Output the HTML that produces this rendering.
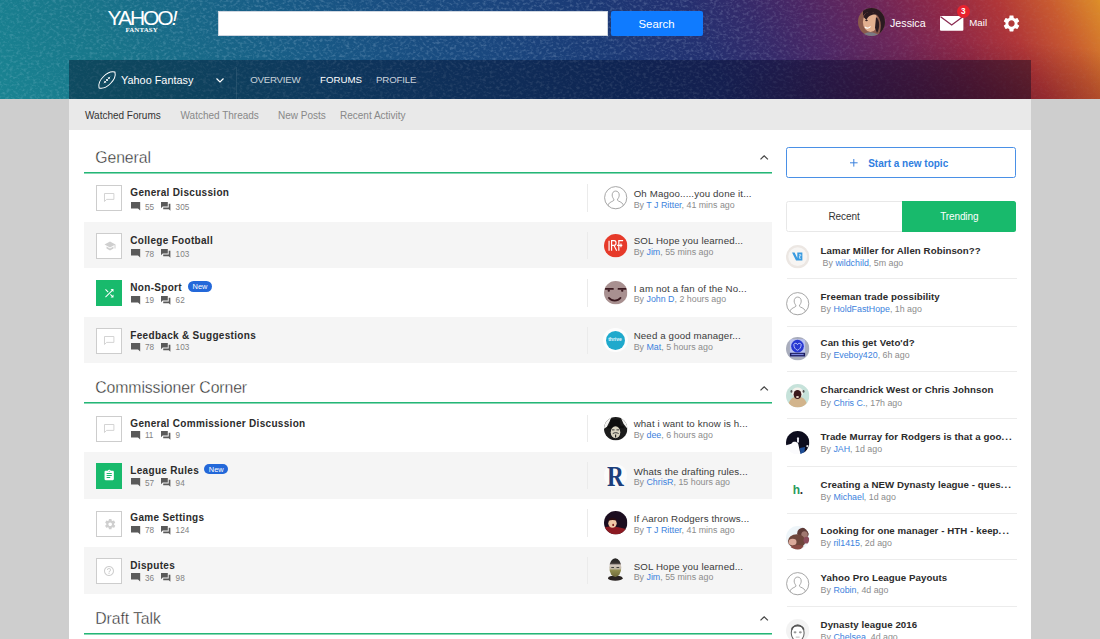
<!DOCTYPE html>
<html lang="en">
<head>
<meta charset="utf-8">
<title>Yahoo Fantasy Forums</title>
<style>
*{box-sizing:border-box;margin:0;padding:0}
html,body{width:1100px;height:639px;overflow:hidden}
body{background:#cecece;font-family:"Liberation Sans",sans-serif;color:#333;position:relative}
a{text-decoration:none;color:#3b82dd}
#hdr{position:absolute;left:0;top:0;width:1100px;height:99px;overflow:hidden;
background:radial-gradient(ellipse 260px 70px at 88% 112%,rgba(50,0,10,.34) 0,rgba(50,0,10,0) 100%),linear-gradient(63deg,#1a8492 0%,#198090 3%,#18768a 11%,#186888 20%,#185a86 29%,#194f82 37%,#1a467e 46%,#1b3a76 55%,#243070 63.500%,#352a6a 69%,#4c2664 74%,#6e2658 80.500%,#902846 86%,#b03638 91%,#c85a30 95.500%,#da882a 99.500%,#de9028 100%)}
#nav{position:absolute;left:69px;top:59.5px;width:962px;height:39.5px;background:rgba(0,8,33,.41)}
#tex{-webkit-mask-image:linear-gradient(90deg,rgba(0,0,0,.75) 0,#000 25%,#000 64%,rgba(0,0,0,.45) 78%,rgba(0,0,0,.12) 100%);mask-image:linear-gradient(90deg,rgba(0,0,0,.75) 0,#000 25%,#000 64%,rgba(0,0,0,.45) 78%,rgba(0,0,0,.12) 100%)}
#subnav{position:absolute;left:69px;top:99px;width:962px;height:30.5px;background:#e9e9e9}
#main{position:absolute;left:69px;top:129.5px;width:962px;height:520px;background:#fff}
.l{position:absolute;white-space:nowrap;line-height:1;transform:translateY(-50%)}
.b{position:absolute}
.h{font-size:15.8px;color:#262626;letter-spacing:-.1px;-webkit-text-stroke:.36px #fff}
.ft{font-size:10px;font-weight:bold;color:#2b2b2b;letter-spacing:.31px}
.st{font-size:8.2px;color:#828282}
.pt{font-size:9.7px;color:#3a3a3a;letter-spacing:.14px}
.by{font-size:8.85px;color:#8c8c8c}
.tt{font-size:9.7px;font-weight:bold;color:#2b2b2b;letter-spacing:.07px}
.tt b{letter-spacing:1.100px;font-weight:bold}
.row{position:absolute;left:84px;width:688px;height:46.700px}
.row.g{background:#f5f5f5}
.ib{position:absolute;left:96.200px;width:26.100px;height:26.100px;border:1px solid #cdcdcd;background:#fff}
.ib.gr{background:#18ba6c;border-color:#18ba6c}
.vd{position:absolute;left:587.3px;width:1px;height:27.5px;background:#ebebeb}
.av{position:absolute;width:23.4px;height:23.4px;border-radius:50%;overflow:hidden}
.gl{position:absolute;left:84px;width:688px;height:2px;background:linear-gradient(#24b676 50%,rgba(36,182,118,.55) 50%)}
.dv{position:absolute;left:786.500px;width:230px;height:1px;background:#ececec}
.new{position:absolute;height:10.9px;width:23.9px;border-radius:5.5px;background:#2368d9;color:#fff;font-size:7.4px;text-align:center;line-height:11.4px}
svg{position:absolute;overflow:visible}
</style>
</head>
<body>
<div id="hdr"><svg id="tex" style="left:0;top:0" width="1100" height="99"><filter id="nz" x="0" y="0" width="100%" height="100%"><feTurbulence type="fractalNoise" baseFrequency="0.30 0.38" numOctaves="2" seed="7"/><feColorMatrix values="0 0 0 0 0.72  0 0 0 0 0.86  0 0 0 0 1  3.200 0 0 0 -1.500"/></filter><rect width="1100" height="99" filter="url(#nz)" opacity=".18"/></svg><div id="nav"></div></div>
<div id="subnav"></div>
<div id="main"></div>
<div class="l " style="left:107.6px;top:17.2px;color:#fff;font-size:21px;letter-spacing:-2.05px;font-weight:normal">YAHOO<i>!</i></div>
<div class="l " style="left:125.5px;top:30.1px;color:#fff;font-size:6.9px;font-family:'Liberation Serif',serif;font-weight:bold;letter-spacing:.1px">FANTASY</div>
<div class="b" style="left:218px;top:11px;width:390px;height:25px;background:#fff;border:1px solid #cfd6e0"></div>
<div class="b" style="left:611px;top:11px;width:92px;height:25px;background:#0f7bff;border-radius:2px"></div>
<div class="l " style="left:638.5px;top:24.9px;color:#fff;font-size:11.35px">Search</div>
<svg style="left:857.500px;top:8px" width="27" height="28" viewBox="0 0 27 28"><defs><clipPath id="jc"><ellipse cx="13.500" cy="14" rx="13.500" ry="14"/></clipPath></defs><g clip-path="url(#jc)"><rect width="27" height="28" fill="#8a5a4c"/><path d="M5 0H27V28H20C24 22,24 12,19 7C15 3,8 3,5 8Z" fill="#2a1a20"/><ellipse cx="12.500" cy="14" rx="7.600" ry="10" fill="#e2b090"/><path d="M5.500 9C7 3.500,14 2,19 6.500C15 6,10 7,8.500 12Z" fill="#2a1a20"/><path d="M18 9C22 12,22 20,19 25L17 20Z" fill="#2a1a20"/><ellipse cx="8.500" cy="12.500" rx="1.300" ry=".7" fill="#3a2220"/><path d="M7 19C8.500 20.500,11 20.500,12.500 18.500" stroke="#fff" stroke-width="1.200" fill="none"/><path d="M4 28C7 23,16 23,22 28Z" fill="#7a7a84"/></g></svg>
<div class="l " style="left:890px;top:23px;color:#fff;font-size:10.7px">Jessica</div>
<div class="l " style="left:969.3px;top:23px;color:#fff;font-size:9.7px">Mail</div>
<svg style="left:940.4px;top:15.8px" width="23.4" height="14.7" viewBox="0 0 23.4 14.7"><rect width="23.4" height="14.7" rx="1" fill="#fff"/><path d="M0.6 0.8 L11.7 9 L22.8 0.8" fill="none" stroke="#8a2a50" stroke-width="1.3"/></svg>
<div class="b" style="left:956.5px;top:5px;width:13px;height:13px;border-radius:50%;background:#e8222e"></div>
<div class="l " style="left:960.9px;top:11.6px;color:#fff;font-size:8.2px;font-weight:bold">3</div>
<svg style="left:1001.600px;top:13.700px" width="19" height="19" viewBox="0 0 24 24"><path fill="#fff" d="M19.43 12.98c.04-.32.07-.64.07-.98s-.03-.66-.07-.98l2.11-1.65c.19-.15.24-.42.12-.64l-2-3.46c-.12-.22-.39-.3-.61-.22l-2.49 1c-.52-.4-1.08-.73-1.69-.98l-.38-2.65C14.46 2.18 14.25 2 14 2h-4c-.25 0-.46.18-.49.42l-.38 2.65c-.61.25-1.17.59-1.69.98l-2.49-1c-.23-.09-.49 0-.61.22l-2 3.46c-.13.22-.07.49.12.64l2.11 1.65c-.04.32-.07.65-.07.98s.03.66.07.98l-2.11 1.65c-.19.15-.24.42-.12.64l2 3.46c.12.22.39.3.61.22l2.49-1c.52.4 1.08.73 1.69.98l.38 2.65c.03.24.24.42.49.42h4c.25 0 .46-.18.49-.42l.38-2.65c.61-.25 1.17-.59 1.69-.98l2.49 1c.23.09.49 0 .61-.22l2-3.46c.12-.22.07-.49-.12-.64l-2.11-1.65zM12 16c-2.21 0-4-1.790-4-4s1.790-4 4-4 4 1.790 4 4-1.790 4-4 4z"/></svg>
<svg style="left:97.5px;top:70.5px" width="18" height="18" viewBox="0 0 18 18"><g transform="rotate(-45 9 9)" fill="none" stroke="#fff" stroke-width="1"><path d="M-2.200 9 C1.500 2.400,16.500 2.400,20.200 9 C16.500 15.600,1.500 15.600,-2.200 9Z"/><path d="M4.500 9H13.500M6.300 7.600v2.800M9 7.600v2.800M11.700 7.600v2.800" stroke-width=".8"/></g></svg>
<div class="l " style="left:121px;top:80px;color:#fff;font-size:10.9px">Yahoo Fantasy</div>
<svg style="left:216.3px;top:78px" width="8" height="5" viewBox="0 0 8 5"><path d="M0.5 0.5 L4 4 L7.5 0.5" fill="none" stroke="#fff" stroke-width="1.2"/></svg>
<div class="b" style="left:236px;top:67px;width:1px;height:32px;background:rgba(255,255,255,.09)"></div>
<div class="l " style="left:250.3px;top:79.8px;color:rgba(255,255,255,.78);font-size:9.7px;letter-spacing:-.25px">OVERVIEW</div>
<div class="l " style="left:320px;top:79.8px;color:#fff;font-size:9.7px">FORUMS</div>
<div class="l " style="left:376px;top:79.8px;color:rgba(255,255,255,.78);font-size:9.7px;letter-spacing:-.15px">PROFILE</div>
<div class="l " style="left:85px;top:115.8px;color:#333;font-size:10px">Watched Forums</div>
<div class="l " style="left:180.5px;top:115.8px;color:#888;font-size:10px">Watched Threads</div>
<div class="l " style="left:278px;top:115.8px;color:#888;font-size:10px">New Posts</div>
<div class="l " style="left:340px;top:115.8px;color:#888;font-size:10px">Recent Activity</div>
<div class="l h" style="left:95.3px;top:157.9px;">General</div>
<svg style="left:760.4px;top:155.2px" width="8.4" height="4.800" viewBox="0 0 8.4 4.8"><path d="M0.500 4.400L4.200 0.800L7.900 4.400" fill="none" stroke="#444" stroke-width="1.250"/></svg>
<div class="gl" style="top:172px"></div>
<div class="row" style="top:174.2px"></div>
<div class="ib" style="top:185.2px"><svg style="left:6.850px;top:7.100px" width="10.400" height="9.500" viewBox="0 0 10.4 9.5"><path d="M0.500 0.500H9.900V6.400H2.600L0.500 8.500Z" fill="none" stroke="#cfcfcf" stroke-width=".9"/></svg></div>
<div class="l ft" style="left:130.3px;top:187.80px;transform:none;">General Discussion</div>
<svg style="left:130.6px;top:201.8px" width="9.2" height="8.6" viewBox="0 0 9.2 8.6"><path d="M0 0H9.200V8.600L7 6.600H0Z" fill="#5a5a5a"/></svg>
<div class="l st" style="left:144.9px;top:203.70px;transform:none;">55</div>
<svg style="left:161.2px;top:201.7px" width="9.4" height="8.800" viewBox="0 0 9.4 8.8"><path d="M0 0H6.800V4.600H1.700L0 6.200Z M7.700 1.800H9.400V8.800L7.800 7.300H2.200V5.500H7.700Z" fill="#5a5a5a"/></svg>
<div class="l st" style="left:175.6px;top:203.70px;transform:none;">305</div>
<div class="vd" style="top:184.2px"></div>
<svg style="left:603.6px;top:186.2px" width="23.4" height="23.4" viewBox="0 0 24 24"><defs><clipPath id="c603186"><circle cx="12" cy="12" r="11.2"/></clipPath></defs><circle cx="12" cy="12" r="11.4" fill="#fff" stroke="#9a9a9a" stroke-width=".9"/><g clip-path="url(#c603186)" fill="none" stroke="#9a9a9a" stroke-width=".9"><path d="M12 5.200c2.300 0 3.600 1.800 3.600 4.100 0 1.700-.8 3.300-1.700 4.100v1.300c.6 1 4.600 1.700 5.600 4.100 .5 1.200.5 3 .5 5H4c0-2 0-3.800.5-5 1-2.400 5-3.100 5.600-4.100v-1.300c-.9-.8-1.700-2.400-1.700-4.100 0-2.300 1.300-4.100 3.600-4.100z"/></g></svg>
<div class="l pt" style="left:633.7px;top:188.95px;transform:none;">Oh Magoo.....you done it...</div>
<div class="l by" style="left:633.7px;top:200.88px;transform:none;">By <a>T J Ritter</a>, 41 mins ago</div>
<div class="row g" style="top:221.7px"></div>
<div class="ib" style="top:232.7px"><svg style="left:6.900px;top:7.700px" width="12" height="10" viewBox="0 0 24 20"><path fill="#cfcfcf" d="M5 11.18v4L12 19l7-3.82v-4L12 15l-7-3.820zM12 1L1 7l11 6 9-4.910V15h2V7L12 1z"/></svg></div>
<div class="l ft" style="left:130.3px;top:235.80px;transform:none;">College Football</div>
<svg style="left:130.6px;top:248.8px" width="9.2" height="8.6" viewBox="0 0 9.2 8.6"><path d="M0 0H9.200V8.600L7 6.600H0Z" fill="#5a5a5a"/></svg>
<div class="l st" style="left:144.9px;top:250.70px;transform:none;">78</div>
<svg style="left:161.2px;top:248.7px" width="9.4" height="8.800" viewBox="0 0 9.4 8.8"><path d="M0 0H6.800V4.600H1.700L0 6.200Z M7.700 1.800H9.400V8.800L7.800 7.300H2.200V5.500H7.700Z" fill="#5a5a5a"/></svg>
<div class="l st" style="left:175.6px;top:250.70px;transform:none;">103</div>
<div class="vd" style="top:231.6px"></div>
<svg style="left:603.6px;top:233.6px" width="23.4" height="23.4" viewBox="0 0 24 24"><defs><clipPath id="k1"><circle cx="12" cy="12" r="12"/></clipPath></defs><g clip-path="url(#k1)"><rect width="24" height="24" fill="#e63a2a"/><g fill="none" stroke="#fff" stroke-width="1.2"><path d="M5.200 6.800V17.200M7.800 17.200V6.800H10.400C13 6.800 13 11.600 10.400 11.600H7.800M10.200 11.600L13 17.200"/><path d="M15.200 17.200V6.800H19.600M13.400 11.600H18.800M17.400 9.800V13.600"/></g></g></svg>
<div class="l pt" style="left:633.7px;top:235.95px;transform:none;">SOL Hope you learned...</div>
<div class="l by" style="left:633.7px;top:247.88px;transform:none;">By <a>Jim</a>, 55 mins ago</div>
<div class="row" style="top:269.2px"></div>
<div class="ib gr" style="top:280.2px"><svg style="left:5.900px;top:6px" width="12.600" height="12.600" viewBox="0 0 24 24"><path fill="#fff" d="M10.590 9.170L5.410 4 4 5.410l5.170 5.170 1.420-1.410zM14.500 4l2.040 2.040L4 18.590 5.410 20 17.960 7.460 20 9.500V4h-5.500zm.33 9.410l-1.410 1.410 3.130 3.130L14.500 20H20v-5.500l-2.040 2.040-3.130-3.130z"/></svg></div>
<div class="l ft" style="left:130.3px;top:282.80px;transform:none;">Non-Sport</div>
<div class="new" style="left:188px;top:280.7px">New</div>
<svg style="left:130.6px;top:295.6px" width="9.2" height="8.6" viewBox="0 0 9.2 8.6"><path d="M0 0H9.200V8.600L7 6.600H0Z" fill="#5a5a5a"/></svg>
<div class="l st" style="left:144.9px;top:296.70px;transform:none;">19</div>
<svg style="left:161.2px;top:295.5px" width="9.4" height="8.800" viewBox="0 0 9.4 8.8"><path d="M0 0H6.800V4.600H1.700L0 6.200Z M7.700 1.800H9.400V8.800L7.800 7.300H2.200V5.500H7.700Z" fill="#5a5a5a"/></svg>
<div class="l st" style="left:175.6px;top:296.70px;transform:none;">62</div>
<div class="vd" style="top:279.1px"></div>
<svg style="left:603.6px;top:281.1px" width="23.4" height="23.4" viewBox="0 0 24 24"><defs><clipPath id="k2"><circle cx="12" cy="12" r="12"/></clipPath></defs><g clip-path="url(#k2)"><rect width="24" height="24" fill="#a89090"/><g fill="#3a1a20"><rect x="1" y="7.300" width="9" height="1.700" rx=".6"/><rect x="14" y="7.300" width="9" height="1.700" rx=".6"/><rect x="3.800" y="8.600" width="2.200" height="2.400" rx=".8"/><rect x="17.600" y="8.600" width="2.200" height="2.400" rx=".8"/></g><path d="M5 17.300C8 21,14 21,17 17.300" fill="none" stroke="#3a1a20" stroke-width="1.700" stroke-linecap="round"/></g></svg>
<div class="l pt" style="left:633.7px;top:283.95px;transform:none;">I am not a fan of the No...</div>
<div class="l by" style="left:633.7px;top:294.88px;transform:none;">By <a>John D</a>, 2 hours ago</div>
<div class="row g" style="top:316.6px"></div>
<div class="ib" style="top:327.6px"><svg style="left:6.850px;top:7.100px" width="10.400" height="9.500" viewBox="0 0 10.4 9.5"><path d="M0.500 0.500H9.900V6.400H2.600L0.500 8.500Z" fill="none" stroke="#cfcfcf" stroke-width=".9"/></svg></div>
<div class="l ft" style="left:130.3px;top:330.80px;transform:none;">Feedback &amp; Suggestions</div>
<svg style="left:130.6px;top:343.0px" width="9.2" height="8.6" viewBox="0 0 9.2 8.6"><path d="M0 0H9.200V8.600L7 6.600H0Z" fill="#5a5a5a"/></svg>
<div class="l st" style="left:144.9px;top:343.70px;transform:none;">78</div>
<svg style="left:161.2px;top:342.9px" width="9.4" height="8.800" viewBox="0 0 9.4 8.8"><path d="M0 0H6.800V4.600H1.700L0 6.200Z M7.700 1.800H9.400V8.800L7.800 7.300H2.200V5.500H7.700Z" fill="#5a5a5a"/></svg>
<div class="l st" style="left:175.6px;top:343.70px;transform:none;">103</div>
<div class="vd" style="top:326.5px"></div>
<div class="b" style="left:603.0px;top:327.9px;width:24.600px;height:24.600px;border-radius:50%;background:#fdfdfd"></div>
<div class="av" style="left:605.8000000000001px;top:330.7px;width:19px;height:19px;background:#1fa9cc"><span style="position:absolute;left:2.400px;top:6.700px;color:#e8f8ff;font-size:5px;font-weight:bold;line-height:1">thrive</span></div>
<div class="l pt" style="left:633.7px;top:330.95px;transform:none;">Need a good manager...</div>
<div class="l by" style="left:633.7px;top:342.88px;transform:none;">By <a>Mat</a>, 5 hours ago</div>
<div class="l h" style="left:95.3px;top:388.2px;">Commissioner Corner</div>
<svg style="left:760.4px;top:385.5px" width="8.4" height="4.800" viewBox="0 0 8.4 4.8"><path d="M0.500 4.400L4.200 0.800L7.900 4.400" fill="none" stroke="#444" stroke-width="1.250"/></svg>
<div class="gl" style="top:402px"></div>
<div class="row" style="top:404.6px"></div>
<div class="ib" style="top:415.6px"><svg style="left:6.850px;top:7.100px" width="10.400" height="9.500" viewBox="0 0 10.4 9.5"><path d="M0.500 0.500H9.900V6.400H2.600L0.500 8.500Z" fill="none" stroke="#cfcfcf" stroke-width=".9"/></svg></div>
<div class="l ft" style="left:130.3px;top:418.80px;transform:none;">General Commissioner Discussion</div>
<svg style="left:130.6px;top:431.0px" width="9.2" height="8.6" viewBox="0 0 9.2 8.6"><path d="M0 0H9.200V8.600L7 6.600H0Z" fill="#5a5a5a"/></svg>
<div class="l st" style="left:144.9px;top:431.70px;transform:none;">11</div>
<svg style="left:161.2px;top:430.9px" width="9.4" height="8.800" viewBox="0 0 9.4 8.8"><path d="M0 0H6.800V4.600H1.700L0 6.200Z M7.700 1.800H9.400V8.800L7.800 7.300H2.200V5.500H7.700Z" fill="#5a5a5a"/></svg>
<div class="l st" style="left:175.6px;top:431.70px;transform:none;">9</div>
<div class="vd" style="top:414.5px"></div>
<svg style="left:603.6px;top:416.5px" width="23.4" height="23.4" viewBox="0 0 24 24"><defs><clipPath id="k3"><circle cx="12" cy="12" r="12"/></clipPath></defs><g clip-path="url(#k3)"><rect width="24" height="24" fill="#1c1c1c"/><path d="M0 0H8L3 10L0 12Z" fill="#f4f4f2"/><path d="M17 0H24V12L20 7Z" fill="#f4f4f2"/><path d="M6.500 2.500H16L17 9H21L20 11.500H3L4 9.500L6 9Z" fill="#0e0e0e"/><ellipse cx="11.800" cy="15.600" rx="4.900" ry="6.200" fill="#d9d4c0"/><path d="M8.200 13.200H10.800M12.800 13.200H15.400" stroke="#333" stroke-width="1"/><path d="M9 17C11 15.800,13 15.800,15 17" stroke="#222" stroke-width=".9" fill="none"/><rect x="11.300" y="18" width="1.200" height="3" fill="#222"/></g></svg>
<div class="l pt" style="left:633.7px;top:418.95px;transform:none;">what i want to know is h...</div>
<div class="l by" style="left:633.7px;top:430.88px;transform:none;">By <a>dee</a>, 6 hours ago</div>
<div class="row g" style="top:452.0px"></div>
<div class="ib gr" style="top:463.0px"><svg style="left:6.100px;top:5.300px" width="12.400" height="13" viewBox="0 0 24 24"><path fill="#fff" d="M19 3h-4.180C14.400 1.840 13.300 1 12 1c-1.300 0-2.400.84-2.820 2H5c-1.100 0-2 .9-2 2v14c0 1.100.9 2 2 2h14c1.100 0 2-.9 2-2V5c0-1.100-.9-2-2-2zm-7 0c.55 0 1 .45 1 1s-.45 1-1 1-1-.45-1-1 .45-1 1-1zm2 14H7v-2h7v2zm3-4H7v-2h10v2zm0-4H7V7h10v2z"/></svg></div>
<div class="l ft" style="left:130.3px;top:465.80px;transform:none;">League Rules</div>
<div class="new" style="left:204.3px;top:463.5px">New</div>
<svg style="left:130.6px;top:478.4px" width="9.2" height="8.6" viewBox="0 0 9.2 8.6"><path d="M0 0H9.200V8.600L7 6.600H0Z" fill="#5a5a5a"/></svg>
<div class="l st" style="left:144.9px;top:479.70px;transform:none;">57</div>
<svg style="left:161.2px;top:478.3px" width="9.4" height="8.800" viewBox="0 0 9.4 8.8"><path d="M0 0H6.800V4.600H1.700L0 6.200Z M7.700 1.800H9.400V8.800L7.800 7.300H2.200V5.500H7.700Z" fill="#5a5a5a"/></svg>
<div class="l st" style="left:175.6px;top:479.70px;transform:none;">94</div>
<div class="vd" style="top:461.9px"></div>
<div class="b" style="left:603.6px;top:463.9px;width:23.400px;height:23.400px;border-radius:50%;background:#fbfbfb"></div>
<div class="l" style="left:607.0px;top:476.0px;font-family:'Liberation Serif',serif;font-weight:bold;font-size:29px;color:#1b3f7c;transform:translateY(-50%) scaleX(.8);transform-origin:0 50%">R</div>
<div class="l pt" style="left:633.7px;top:466.95px;transform:none;">Whats the drafting rules...</div>
<div class="l by" style="left:633.7px;top:477.88px;transform:none;">By <a>ChrisR</a>, 15 hours ago</div>
<div class="row" style="top:499.5px"></div>
<div class="ib" style="top:510.5px"><svg style="left:6.400px;top:6.400px" width="12.400" height="12.400" viewBox="0 0 24 24"><path fill="#cfcfcf" d="M19.43 12.98c.04-.32.07-.64.07-.98s-.03-.66-.07-.98l2.11-1.65c.19-.15.24-.42.12-.64l-2-3.46c-.12-.22-.39-.3-.61-.22l-2.49 1c-.52-.4-1.08-.73-1.69-.98l-.38-2.65C14.46 2.18 14.25 2 14 2h-4c-.25 0-.46.18-.49.42l-.38 2.65c-.61.25-1.17.59-1.69.98l-2.49-1c-.23-.09-.49 0-.61.22l-2 3.46c-.13.22-.07.49.12.64l2.11 1.65c-.04.32-.07.65-.07.98s.03.66.07.98l-2.11 1.65c-.19.15-.24.42-.12.64l2 3.46c.12.22.39.3.61.22l2.49-1c.52.4 1.08.73 1.69.98l.38 2.65c.03.24.24.42.49.42h4c.25 0 .46-.18.49-.42l.38-2.65c.61-.25 1.17-.59 1.69-.98l2.49 1c.23.09.49 0 .61-.22l2-3.46c.12-.22.07-.49-.12-.64l-2.110-1.650zM12 15.500c-1.930 0-3.500-1.570-3.500-3.500s1.570-3.500 3.500-3.500 3.500 1.570 3.500 3.500-1.570 3.500-3.500 3.500z"/></svg></div>
<div class="l ft" style="left:130.3px;top:512.80px;transform:none;">Game Settings</div>
<svg style="left:130.6px;top:525.9px" width="9.2" height="8.6" viewBox="0 0 9.2 8.6"><path d="M0 0H9.200V8.600L7 6.600H0Z" fill="#5a5a5a"/></svg>
<div class="l st" style="left:144.9px;top:526.70px;transform:none;">78</div>
<svg style="left:161.2px;top:525.8px" width="9.4" height="8.800" viewBox="0 0 9.4 8.8"><path d="M0 0H6.800V4.600H1.700L0 6.200Z M7.700 1.800H9.400V8.800L7.800 7.300H2.200V5.500H7.700Z" fill="#5a5a5a"/></svg>
<div class="l st" style="left:175.6px;top:526.70px;transform:none;">124</div>
<div class="vd" style="top:509.4px"></div>
<svg style="left:603.6px;top:511.4px" width="23.4" height="23.4" viewBox="0 0 24 24"><defs><clipPath id="k4"><circle cx="12" cy="12" r="12"/></clipPath></defs><g clip-path="url(#k4)"><rect width="24" height="24" fill="#1b0d1f"/><path d="M0 17C6 15,14 16,24 19V24H0Z" fill="#8c1a22"/><ellipse cx="8.700" cy="12.600" rx="4.300" ry="4.500" fill="#f0c8a6"/><path d="M4 10C5 6,12 6,13.500 10C11 9,7 9,4 10Z" fill="#2a0c10"/><ellipse cx="9.400" cy="14.300" rx=".9" ry="1.200" fill="#7a1a1a"/></g></svg>
<div class="l pt" style="left:633.7px;top:513.95px;transform:none;">If Aaron Rodgers throws...</div>
<div class="l by" style="left:633.7px;top:525.88px;transform:none;">By <a>T J Ritter</a>, 41 mins ago</div>
<div class="row g" style="top:547.0px"></div>
<div class="ib" style="top:558.0px"><svg style="left:6.200px;top:6.200px" width="12" height="12" viewBox="0 0 24 24"><path fill="#cfcfcf" d="M11 18h2v-2h-2v2zm1-16C6.480 2 2 6.480 2 12s4.480 10 10 10 10-4.480 10-10S17.520 2 12 2zm0 18c-4.410 0-8-3.590-8-8s3.590-8 8-8 8 3.590 8 8-3.590 8-8 8zm0-14c-2.210 0-4 1.790-4 4h2c0-1.100.9-2 2-2s2 .9 2 2c0 2-3 1.750-3 5h2c0-2.250 3-2.500 3-5 0-2.210-1.790-4-4-4z"/></svg></div>
<div class="l ft" style="left:130.3px;top:560.80px;transform:none;">Disputes</div>
<svg style="left:130.6px;top:573.4px" width="9.2" height="8.6" viewBox="0 0 9.2 8.6"><path d="M0 0H9.200V8.600L7 6.600H0Z" fill="#5a5a5a"/></svg>
<div class="l st" style="left:144.9px;top:574.70px;transform:none;">36</div>
<svg style="left:161.2px;top:573.2px" width="9.4" height="8.800" viewBox="0 0 9.4 8.8"><path d="M0 0H6.800V4.600H1.700L0 6.200Z M7.700 1.800H9.400V8.800L7.800 7.300H2.200V5.500H7.700Z" fill="#5a5a5a"/></svg>
<div class="l st" style="left:175.6px;top:574.70px;transform:none;">98</div>
<div class="vd" style="top:556.9px"></div>
<svg style="left:608.0px;top:558.3px" width="15" height="23" viewBox="0 0 15 23"><defs><linearGradient id="zg" x1="0" y1="0" x2="0" y2="1"><stop offset="0" stop-color="#222"/><stop offset=".27" stop-color="#3a3432"/><stop offset=".36" stop-color="#d4c8c0"/><stop offset=".55" stop-color="#c2b8a4"/><stop offset=".66" stop-color="#8f8c4c"/><stop offset="1" stop-color="#6f6a3a"/></linearGradient></defs><ellipse cx="7.300" cy="20.200" rx="7.300" ry="2.600" fill="#2a2422"/><ellipse cx="7.300" cy="9.600" rx="6" ry="9.300" fill="url(#zg)"/><path d="M3.300 9.500H6M8.500 9.500H11.200" stroke="#333" stroke-width=".9"/></svg>
<div class="l pt" style="left:633.7px;top:561.95px;transform:none;">SOL Hope you learned...</div>
<div class="l by" style="left:633.7px;top:572.88px;transform:none;">By <a>Jim</a>, 55 mins ago</div>
<div class="l h" style="left:95.3px;top:618.6px;">Draft Talk</div>
<svg style="left:760.4px;top:615.9px" width="8.4" height="4.800" viewBox="0 0 8.4 4.8"><path d="M0.500 4.400L4.200 0.800L7.900 4.400" fill="none" stroke="#444" stroke-width="1.250"/></svg>
<div class="gl" style="top:633px"></div>
<div class="b" style="left:786.300px;top:147.200px;width:230.200px;height:30.900px;border:1.300px solid #4a90e6;border-radius:2.5px;background:#fff"></div>
<svg style="left:850.4px;top:159px" width="7.6" height="7.600" viewBox="0 0 7.6 7.6"><path d="M3.800 0V7.600M0 3.800H7.600" stroke="#3b82dd" stroke-width="1"/></svg>
<div class="l " style="left:868.2px;top:163.6px;color:#2f7ee0;font-size:10px;font-weight:bold">Start a new topic</div>
<div class="b" style="left:786.400px;top:201.200px;width:230px;height:30.500px;border:1px solid #e8e8e8;border-radius:2.5px;background:#fff"></div>
<div class="b" style="left:901.500px;top:201.200px;width:114.900px;height:30.500px;border-radius:0 2.5px 2.5px 0;background:#18ba6c"></div>
<div class="l " style="left:828.5px;top:217.3px;color:#333;font-size:10px;letter-spacing:-.1px">Recent</div>
<div class="l " style="left:940.2px;top:217.3px;color:#fff;font-size:10px;letter-spacing:-.12px">Trending</div>
<svg style="left:785.9px;top:244.5px" width="23.4" height="23.4" viewBox="0 0 24 24"><defs><clipPath id="k5"><circle cx="12" cy="12" r="12"/></clipPath></defs><g clip-path="url(#k5)"><rect width="24" height="24" fill="#ece7e3"/><circle cx="12" cy="12" r="9.600" fill="#f7f5f3"/><path d="M6.200 7.800H8.800L11.600 13.300V7.800H16.800V15.800H10.300Z" fill="#3a9be0"/><path d="M13.300 10H15.200V11.200H13.800V13.600H15.200" fill="none" stroke="#cfe8fa" stroke-width=".9"/></g></svg>
<div class="l tt" style="left:820.6px;top:245.95px;transform:none;">Lamar Miller for Allen Robinson??</div>
<div class="l by" style="left:822.6px;top:258.88px;transform:none;">By <a>wildchild</a>, 5m ago</div>
<div class="dv" style="top:278px"></div>
<svg style="left:785.9px;top:292px" width="23.4" height="23.4" viewBox="0 0 24 24"><defs><clipPath id="c785292"><circle cx="12" cy="12" r="11.2"/></clipPath></defs><circle cx="12" cy="12" r="11.4" fill="#fff" stroke="#9a9a9a" stroke-width=".9"/><g clip-path="url(#c785292)" fill="none" stroke="#9a9a9a" stroke-width=".9"><path d="M12 5.200c2.300 0 3.600 1.800 3.600 4.100 0 1.700-.8 3.300-1.700 4.100v1.300c.6 1 4.600 1.700 5.600 4.100 .5 1.200.5 3 .5 5H4c0-2 0-3.800.5-5 1-2.400 5-3.100 5.600-4.100v-1.300c-.9-.8-1.700-2.400-1.700-4.100 0-2.300 1.300-4.100 3.600-4.100z"/></g></svg>
<div class="l tt" style="left:820.6px;top:291.95px;transform:none;">Freeman trade possibility</div>
<div class="l by" style="left:820.6px;top:304.88px;transform:none;">By <a>HoldFastHope</a>, 1h ago</div>
<div class="dv" style="top:326px"></div>
<svg style="left:785.9px;top:337px" width="23.4" height="23.4" viewBox="0 0 24 24"><defs><clipPath id="k6"><circle cx="12" cy="12" r="12"/></clipPath></defs><g clip-path="url(#k6)"><rect width="24" height="24" fill="#a9adbc"/><rect x="4" y="2.200" width="15.600" height="18.400" rx="2" fill="#b9c1f0"/><circle cx="11.800" cy="9.400" r="6.500" fill="#2838d2"/><path d="M8 7.500C9.500 5.800,11 6.300,11.800 7.800C12.600 6.300,14.100 5.800,15.600 7.500C15.600 11,13.500 13,11.800 13.600C10.100 13,8 11,8 7.500Z" fill="none" stroke="#cdd6ff" stroke-width=".9"/><rect x="4" y="16.200" width="15.600" height="3.800" fill="#1b1b5c"/><rect x="5.500" y="17.300" width="12.600" height="1.300" fill="#7a86e0"/></g></svg>
<div class="l tt" style="left:820.6px;top:337.95px;transform:none;">Can this get Veto&#x27;d?</div>
<div class="l by" style="left:820.6px;top:350.88px;transform:none;">By <a>Eveboy420</a>, 6h ago</div>
<div class="dv" style="top:371px"></div>
<svg style="left:785.9px;top:384px" width="23.4" height="23.4" viewBox="0 0 24 24"><defs><clipPath id="k7"><circle cx="12" cy="12" r="12"/></clipPath></defs><g clip-path="url(#k7)"><rect width="24" height="24" fill="#c6e2da"/><path d="M2 24C3 15,7 13,12 13S21 15,22 24Z" fill="#d2b48c"/><ellipse cx="11.800" cy="8.800" rx="6" ry="5.200" fill="#f4f2ec"/><ellipse cx="5.600" cy="7.600" rx="1" ry="1.500" fill="#555"/><ellipse cx="18" cy="7.600" rx="1" ry="1.500" fill="#555"/><ellipse cx="11.800" cy="10.800" rx="4" ry="4.600" fill="#3c1a1c"/><ellipse cx="11.800" cy="13.300" rx="1.500" ry="1" fill="#e8d8c8"/></g></svg>
<div class="l tt" style="left:820.6px;top:384.95px;transform:none;">Charcandrick West or Chris Johnson</div>
<div class="l by" style="left:820.6px;top:398.88px;transform:none;">By <a>Chris C.</a>, 17h ago</div>
<div class="dv" style="top:418px"></div>
<svg style="left:785.9px;top:431px" width="23.4" height="23.4" viewBox="0 0 24 24"><defs><clipPath id="k8"><circle cx="12" cy="12" r="12"/></clipPath></defs><g clip-path="url(#k8)"><rect width="24" height="24" fill="#fbfbfd"/><path d="M0 0H24V15L20 22H14.500L12.500 13C10.500 10.500,7 10.500,5.500 13L0 14.500Z" fill="#0d0d1e"/><path d="M14.400 17.500L19.500 16.500L19 21.500L14.800 24Z" fill="#1d4d96"/><rect x="11.300" y="6.500" width="2" height="5.500" rx="1" fill="#e8e8f0"/><circle cx="22" cy="15.500" r="1.200" fill="#ddd"/></g></svg>
<div class="l tt" style="left:820.6px;top:431.95px;transform:none;">Trade Murray for Rodgers is that a goo<b>...</b></div>
<div class="l by" style="left:820.6px;top:444.88px;transform:none;">By <a>JAH</a>, 1d ago</div>
<div class="dv" style="top:466px"></div>
<div class="l" style="left:792.6999999999999px;top:489.6px;font-size:12px;font-weight:bold;color:#2a9a5c;letter-spacing:-.2px">h<span style="color:#333">.</span></div>
<div class="l tt" style="left:820.6px;top:479.95px;transform:none;">Creating a NEW Dynasty league - ques<b>...</b></div>
<div class="l by" style="left:820.6px;top:492.88px;transform:none;">By <a>Michael</a>, 1d ago</div>
<div class="dv" style="top:513px"></div>
<svg style="left:785.9px;top:526px" width="23.4" height="23.4" viewBox="0 0 24 24"><defs><clipPath id="k9"><circle cx="12" cy="12" r="12"/></clipPath></defs><g clip-path="url(#k9)"><rect width="24" height="24" fill="#eef5f9"/><ellipse cx="17.500" cy="7.500" rx="6" ry="5.800" fill="#5e3a36"/><ellipse cx="19" cy="9" rx="3.300" ry="3.600" fill="#a07870"/><ellipse cx="11" cy="15.500" rx="9" ry="7" fill="#6e463c"/><ellipse cx="6.800" cy="16.500" rx="4" ry="3.400" fill="#dba99a"/><path d="M4 22C8 19,14 19,18 21L14 25H6Z" fill="#8a4a44"/><ellipse cx="21" cy="14.500" rx="3" ry="3.500" fill="#8a4a5a"/></g></svg>
<div class="l tt" style="left:820.6px;top:525.95px;transform:none;">Looking for one manager - HTH - keep<b>...</b></div>
<div class="l by" style="left:820.6px;top:538.88px;transform:none;">By <a>ril1415</a>, 2d ago</div>
<div class="dv" style="top:559px"></div>
<svg style="left:785.9px;top:572px" width="23.4" height="23.4" viewBox="0 0 24 24"><defs><clipPath id="c785572"><circle cx="12" cy="12" r="11.2"/></clipPath></defs><circle cx="12" cy="12" r="11.4" fill="#fff" stroke="#9a9a9a" stroke-width=".9"/><g clip-path="url(#c785572)" fill="none" stroke="#9a9a9a" stroke-width=".9"><path d="M12 5.200c2.300 0 3.600 1.800 3.600 4.100 0 1.700-.8 3.300-1.700 4.100v1.300c.6 1 4.600 1.700 5.600 4.100 .5 1.200.5 3 .5 5H4c0-2 0-3.800.5-5 1-2.400 5-3.100 5.600-4.100v-1.300c-.9-.8-1.700-2.400-1.700-4.100 0-2.300 1.300-4.100 3.600-4.100z"/></g></svg>
<div class="l tt" style="left:820.6px;top:572.95px;transform:none;">Yahoo Pro League Payouts</div>
<div class="l by" style="left:820.6px;top:585.88px;transform:none;">By <a>Robin</a>, 4d ago</div>
<div class="dv" style="top:606px"></div>
<svg style="left:785.9px;top:619px" width="23.4" height="23.4" viewBox="0 0 24 24"><defs><clipPath id="k10"><circle cx="12" cy="12" r="12"/></clipPath></defs><g clip-path="url(#k10)"><rect width="24" height="24" fill="#f3f3f3"/><ellipse cx="12" cy="14.400" rx="6.600" ry="8.400" fill="#fff" stroke="#666" stroke-width="1.100"/><path d="M5.800 11C7 5.500,17 5.500,18.200 11" fill="none" stroke="#555" stroke-width="1.600"/><ellipse cx="9.300" cy="13.700" rx="1.500" ry="1.100" fill="#999"/><ellipse cx="14.700" cy="13.700" rx="1.500" ry="1.100" fill="#999"/><path d="M10 18.600H14" stroke="#aaa" stroke-width=".8"/></g></svg>
<div class="l tt" style="left:820.6px;top:619.95px;transform:none;">Dynasty league 2016</div>
<div class="l by" style="left:820.6px;top:632.88px;transform:none;">By <a>Chelsea</a>, 4d ago</div>
<div class="dv" style="top:653px"></div>
</body>
</html>
